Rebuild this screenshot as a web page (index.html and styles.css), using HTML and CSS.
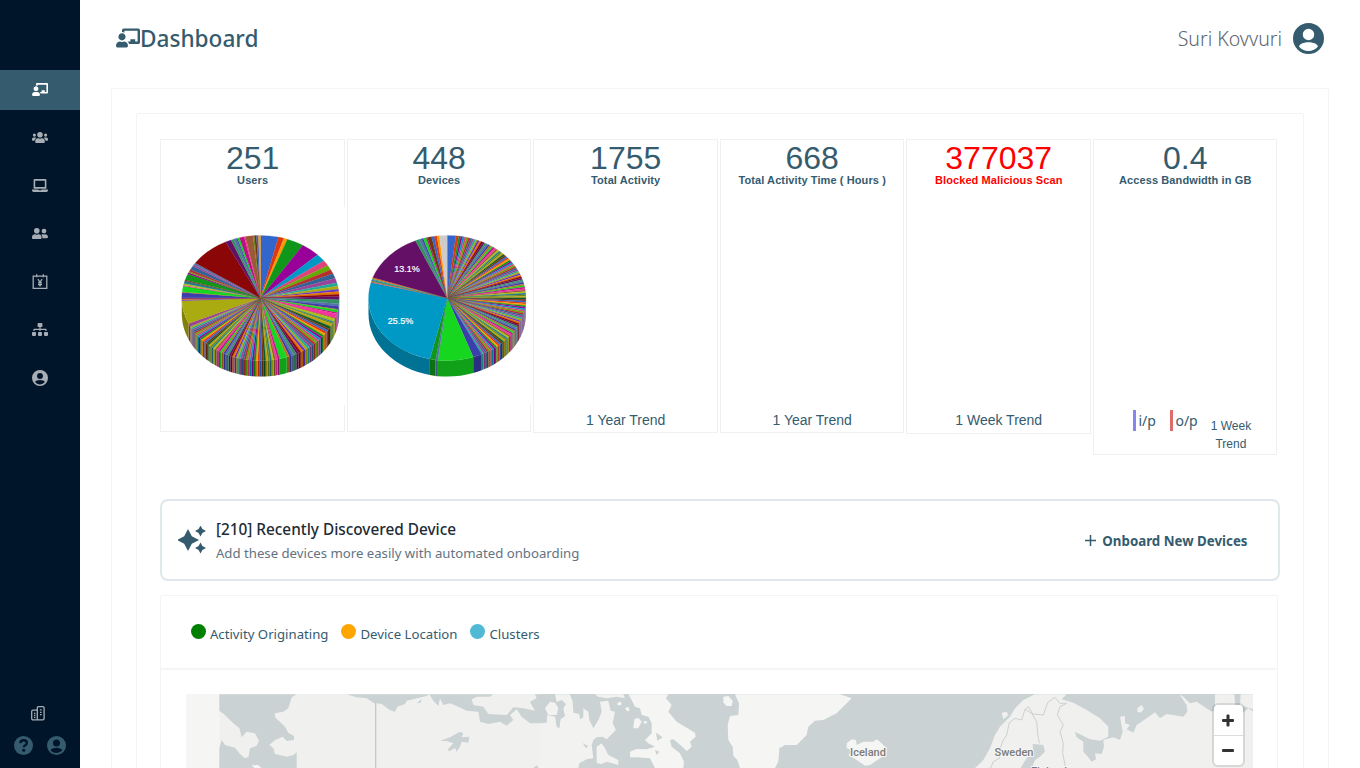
FILE: index.html
```html
<!DOCTYPE html>
<html lang="en">
<head>
<meta charset="utf-8">
<title>Dashboard</title>
<link rel="stylesheet" href="styles.css">
</head>
<body>
<svg class="defs" width="0" height="0">
  <symbol id="board" viewBox="0 0 640 512"><path d="M208 352c-2.400 0-4.800.4-7.100 1.100C188 357.300 174.400 360 160 360s-28-2.700-40.900-6.900c-2.300-.7-4.700-1.100-7.100-1.100C49.900 352-.3 402.500 0 464.600.1 490.900 21.700 512 48 512h224c26.300 0 47.900-21.100 48-47.400.3-62.100-49.900-112.600-112-112.600zm-48-32c53 0 96-43 96-96s-43-96-96-96-96 43-96 96 43 96 96 96zM592 0H208c-26.500 0-48 22.200-48 49.600V96c23.400 0 45.100 6.800 64 17.800V64h352v288h-64v-64H384v64h-76.200c19.100 16.700 33.100 38.700 39.700 64H592c26.500 0 48-22.200 48-49.600V49.600C640 22.200 618.500 0 592 0z"/></symbol>
  <symbol id="users3" viewBox="0 0 640 512"><path d="M96 224a64 64 0 1 0 0-128 64 64 0 0 0 0 128zm448 0a64 64 0 1 0 0-128 64 64 0 0 0 0 128zm32 32h-64c-17.600 0-33.500 7.100-45.100 18.600 40.300 22.100 68.900 62 75.100 109.400h66c17.700 0 32-14.300 32-32v-32c0-35.300-28.700-64-64-64zm-256 0a112 112 0 1 0 0-224 112 112 0 0 0 0 224zm76.800 32h-8.300a154 154 0 0 1-137 0h-8.300C179.600 288 128 339.600 128 403.200V432c0 26.500 21.500 48 48 48h288c26.500 0 48-21.500 48-48v-28.800c0-63.600-51.600-115.200-115.200-115.200zm-223.700-13.400C161.500 263.100 145.600 256 128 256H64c-35.300 0-64 28.700-64 64v32c0 17.700 14.300 32 32 32h65.900c6.300-47.400 34.900-87.300 75.200-109.400z"/></symbol>
  <symbol id="users2" viewBox="0 0 640 512"><path d="M192 256a112 112 0 1 0 0-224 112 112 0 0 0 0 224zm76.800 32h-8.300a154 154 0 0 1-137 0h-8.300C51.600 288 0 339.600 0 403.200V432c0 26.500 21.500 48 48 48h288c26.500 0 48-21.500 48-48v-28.800c0-63.600-51.600-115.200-115.200-115.200zM480 256a96 96 0 1 0 0-192 96 96 0 0 0 0 192zm48 32h-3.800a128 128 0 0 1-88.400 0H432c-20.400 0-39.200 5.900-55.700 15.400 24.400 26.300 39.700 61.200 39.700 99.800v38.400c0 2.200-.5 4.300-.6 6.400H592c26.500 0 48-21.500 48-48 0-61.900-50.100-112-112-112z"/></symbol>
  <symbol id="laptop" viewBox="0 0 640 512"><path d="M624 416H381.500c-.7 19.800-14.700 32-32.700 32H288c-18.700 0-33-17.500-32.800-32H16c-8.800 0-16 7.200-16 16v16c0 35.200 28.800 64 64 64h512c35.200 0 64-28.800 64-64v-16c0-8.800-7.200-16-16-16zM576 48c0-26.400-21.600-48-48-48H112C85.600 0 64 21.600 64 48v336h512zm-64 272H128V64h384z"/></symbol>
  <symbol id="tree" viewBox="0 0 640 512"><path d="M128 352H32c-17.700 0-32 14.300-32 32v96c0 17.700 14.300 32 32 32h96c17.700 0 32-14.300 32-32v-96c0-17.700-14.300-32-32-32zm-24-80h192v48h48v-48h192v48h48v-57.600c0-21.200-17.200-38.400-38.400-38.400H344v-64h40c17.700 0 32-14.300 32-32V32c0-17.700-14.300-32-32-32H256c-17.700 0-32 14.300-32 32v96c0 17.700 14.300 32 32 32h40v64H94.400C73.200 224 56 241.200 56 262.400V320h48zm264 80h-96c-17.700 0-32 14.300-32 32v96c0 17.700 14.300 32 32 32h96c17.700 0 32-14.300 32-32v-96c0-17.700-14.300-32-32-32zm240 0h-96c-17.700 0-32 14.300-32 32v96c0 17.700 14.300 32 32 32h96c17.700 0 32-14.300 32-32v-96c0-17.700-14.300-32-32-32z"/></symbol>
  <symbol id="user" viewBox="2 2 20 20"><path d="M12 2a10 10 0 1 0 0 20 10 10 0 0 0 0-20zm0 3.700a3.700 3.700 0 1 1 0 7.400 3.700 3.700 0 0 1 0-7.400zM12 20c-2.600 0-4.700-1.100-6.100-2.900.3-1.700 3.300-2.700 6.100-2.700s5.800 1 6.100 2.700A7.800 7.800 0 0 1 12 20z"/></symbol>
  <symbol id="calendar" viewBox="0 0 16 16"><path fill="none" stroke="currentColor" stroke-width="1.300" d="M1.200 2.200h13.600v12.100H1.200zM4.700.2v3M11.300.2v3M5.900 5.200 8 8.400l2.100-3.200M8 8.400v4M6 8.800h4M6 10.700h4"/></symbol>
  <symbol id="city" viewBox="0 0 14 15"><path fill="none" stroke="currentColor" stroke-width="1.300" d="M6.300 13.900V2c0-.8.500-1.300 1.300-1.300h4.200c.8 0 1.300.5 1.300 1.300v10.600c0 .8-.5 1.300-1.300 1.300H2c-.8 0-1.300-.5-1.300-1.300V5.500c0-.8.500-1.300 1.300-1.300h4.300"/><path fill="none" stroke="currentColor" stroke-width="1.200" d="M3 7.400h1.400M3 9.400h1.400M3 11.400h1.400M9 3.900h1.600M9 6.300h1.600M9 8.700h1.600"/></symbol>
  <symbol id="help" viewBox="0 0 20 20"><circle cx="10" cy="10" r="10"/><path d="M6.600 7.500c.2-2 1.600-3 3.500-3 2 0 3.400 1.100 3.400 2.900 0 2.500-3.200 2.400-3.200 4.400" fill="none" stroke="#001529" stroke-width="2.500"/><circle cx="10.200" cy="14.900" r="1.600" fill="#001529"/></symbol>
  <symbol id="sparkle" viewBox="0 0 28 28"><path d="M10 3 13.800 10.200 21 14 13.800 17.800 10 25 6.200 17.800-1 14 6.200 10.200zM22.500-.5l1.900 3.600L28 5 24.400 6.900 22.500 10.500 20.600 6.900 17 5 20.600 3.100zM22.500 16.500l1.900 3.600L28 22 24.400 23.900 22.500 27.500 20.600 23.900 17 22 20.600 20.100z"/></symbol>
</svg>
<div class="app">
  <nav class="side">
    <div class="menu">
      <a class="item active"><svg class="i16x13"><use href="#board"/></svg></a>
      <a class="item"><svg class="i16x13"><use href="#users3"/></svg></a>
      <a class="item"><svg class="i16x13"><use href="#laptop"/></svg></a>
      <a class="item"><svg class="i16x13"><use href="#users2"/></svg></a>
      <a class="item"><svg class="i16"><use href="#calendar"/></svg></a>
      <a class="item"><svg class="i16x13"><use href="#tree"/></svg></a>
      <a class="item"><svg class="i16"><use href="#user"/></svg></a>
    </div>
    <div class="bottom">
      <svg class="city"><use href="#city"/></svg>
      <div class="pair"><svg class="i19"><use href="#help"/></svg><svg class="i19"><use href="#user"/></svg></div>
    </div>
  </nav>
  <main class="main">
    <header class="head">
      <h1 class="title"><svg class="title-icon"><use href="#board"/></svg><span class="title-text">Dashboard</span></h1>
      <div class="account"><span>Suri Kovvuri</span><svg class="avatar"><use href="#user"/></svg></div>
    </header>
    <div class="outer"><div class="inner">
      <section class="cards">
        <article class="card c293"><div class="num">251</div><div class="lbl">Users</div><svg class="pie" id="pie1" viewBox="0 0 185 198"></svg></article>
        <article class="card c293"><div class="num">448</div><div class="lbl">Devices</div><svg class="pie" id="pie2" viewBox="0 0 185 198"></svg></article>
        <article class="card c294"><div class="num">1755</div><div class="lbl">Total Activity</div><div class="trend">1 Year Trend</div></article>
        <article class="card c294"><div class="num">668</div><div class="lbl">Total Activity Time ( Hours )</div><div class="trend">1 Year Trend</div></article>
        <article class="card c295 danger"><div class="num">377037</div><div class="lbl">Blocked Malicious Scan</div><div class="trend">1 Week Trend</div></article>
        <article class="card c315"><div class="num">0.4</div><div class="lbl">Access Bandwidth in GB</div>
          <div class="io"><span class="port in">i/p</span><span class="port out">o/p</span><span class="week">1 Week<br>Trend</span></div></article>
      </section>
      <section class="notice">
        <svg class="spark"><use href="#sparkle"/></svg>
        <div class="notice-text"><div class="notice-title">[210] Recently Discovered Device</div><div class="notice-sub">Add these devices more easily with automated onboarding</div></div>
        <div class="onboard"><svg class="plus" viewBox="0 0 11 11"><path d="M5.500 0v11M0 5.500h11"/></svg>Onboard New Devices</div>
      </section>
      <section class="mapbox">
        <div class="legend"><span class="key"><i class="dot green"></i>Activity Originating</span><span class="key"><i class="dot orange"></i>Device Location</span><span class="key"><i class="dot blue"></i>Clusters</span></div>
        <div class="mapwrap">
          <svg class="map" viewBox="186 694 1067 340">
            <rect class="water" x="186" y="694" width="1067" height="340"/>
            <rect class="land" x="219" y="694" width="322" height="340"/>
            <rect class="pale" x="186" y="694" width="33.500" height="340"/>
            <g transform="translate(160 680) scale(.33333)">
              <path class="water" d="M178 43H410L395 52 385 85 370 95 345 100V112L375 140 385 158 402 168V180L380 183 368 170 345 180 328 195 340 205 345 222 380 230 400 225 410 217V264H178V205L185 180 195 195 225 203 240 222 255 235 266 230 270 205 290 197 297 182 285 160 260 155 245 172 238 145 215 125 195 105 178 92z"/>
              <path class="water" d="M560 43 590 52 620 55 640 68 665 72 690 90 705 96 712 80 735 72 740 62 765 56 800 48 808 43zM770 70 785 57 782 68zM808 43 820 62 835 78 840 55 850 75 870 70 890 78 920 92 955 95 960 125 985 132 1020 125 1040 137 1060 120 1050 105 1070 88 1085 110 1110 130 1160 130 1165 105 1155 90 1160 70 1175 65 1190 75 1200 60V43H1125L1130 55 1110 65 1125 92 1090 85 1060 82 1040 105 985 102 970 80 940 75 935 58 950 50 990 50 1000 43z"/>
              <path class="water" d="M840 182 870 172 900 155 910 160 905 172 928 170 925 188 905 185 900 200 890 215 885 203 870 213 862 210 880 190 860 183z"/>
              <path class="water" d="M1120 264 1130 256 1136 264z"/>
              <path class="pale" d="M275 256 295 255 306 266 285 266z"/>
              <path class="line" d="M647 66V300"/>
            </g>
            <g transform="translate(540 680) scale(.33333)">
              <path class="mid" d="M0 130 20 128 22 105 45 110 50 140 58 145 62 118 75 108 70 85 78 72 65 60 50 66 45 43H90L98 65 100 98 118 102 120 118 130 112 130 85 145 95 148 120 160 145 175 120 185 95 180 65 205 62 212 92 225 95 218 130 228 150 200 178 188 170 170 172 160 180 155 195 160 235 140 238 118 250 115 264H0zM15 85 30 65 45 68 55 85 50 105 25 105zM170 200 185 190 195 205 205 225 235 240 235 255 200 245 185 252 170 250zM165 43H250L255 55 230 50 200 55 175 50z"/>
              <path class="pale" d="M265 43H385L378 55 395 75 385 95 410 125 435 140 465 158 467 170 450 185 455 200 440 213 415 190 400 178 390 180 395 200 420 220 432 245 430 264H345L330 235 290 232 270 232 270 215 290 207 320 208 345 200 325 190 315 180 335 160 335 130 325 110 305 105 300 85 285 80 275 60zM283 118 295 113 305 125 295 145 280 145zM550 50 565 48 578 62 575 78 560 78 550 68zM230 72l10-8 6 8-8 5zM255 85l10-5 4 12-8 2zM310 125l8-3 4 7-9 2z"/>
              <path class="water" d="M348 158 368 172 352 182zM345 210 358 215 350 225zM128 190 145 198 138 205z"/>
              <path class="pale" d="M585 43 597 70 595 105 570 108 563 135 565 180 578 200 580 228 592 240 600 264H705L715 245 718 205 735 195 770 195 800 165 805 140 825 122 850 120 890 100 935 55 900 43zM920 190 935 178 948 180 950 195 970 185 1000 185 1010 178 1020 185 1040 205V222L1020 235 990 255 975 257 950 240 925 225 940 212 920 205z"/>
            </g>
            <g transform="translate(900 680) scale(.33333)">
              <path class="land" d="M225 264 250 240 270 205 285 165 300 140 330 110 345 85 370 60 400 45 405 43H500L485 58 520 68 560 90 600 115 625 140V170L600 182 570 178 525 155 530 172 550 185V215L565 232 575 245 588 238 585 220 605 222 612 200 610 180 640 172 660 180 668 155 660 110 675 108V130L690 135 680 148 700 158 710 135 740 115 765 97 780 115 800 102 850 110 862 95 860 75 838 43 850 50 870 70 890 65 935 95 945 90V43H1003L1005 70 1010 95 1028 100 1045 85 1060 95V264zM1022 43H1060V88L1040 82 1020 75zM712 85 725 75 732 87 722 98 712 95zM305 98 320 95 325 105 310 118z"/>
              <path class="water" d="M362 264 380 235 400 215 398 192 430 195 435 215 420 230 405 240 395 264z"/>
              <path class="line thin" d="M272 264 280 245 298 235 300 205 310 180 320 165 328 128 345 115 365 120 375 88 395 100 410 125 413 160 418 190M375 88 385 80 398 102 430 105 443 68 465 52 480 70 500 70 480 80 472 105 490 135 480 155 490 190 488 220 497 264"/>
            </g>
            <text class="place" x="868" y="755.500">Iceland</text>
            <text class="place" x="1014" y="756">Sweden</text>
            <text class="place" x="1049" y="775">Finland</text>
          </svg>
          <div class="zoomer"><span class="zb"><i class="bar"></i><i class="bar up"></i></span><span class="zb"><i class="bar"></i></span></div>
        </div>
      </section>
    </div></div>
  </main>
</div>
<script src="pies.js"></script>
</body>
</html>
```
FILE: styles.css
```css
*{box-sizing:border-box}
body{margin:0;font-family:"Noto Sans","Open Sans",sans-serif;color:#355b6e;background:#fff;overflow:hidden}
.defs{position:absolute}
svg{fill:currentColor;display:block}
.app{display:flex;height:768px;overflow:hidden}
.side{width:80px;flex:none;background:#001529;display:flex;flex-direction:column;justify-content:space-between;padding:70px 0 13px}
.menu{display:flex;flex-direction:column;gap:8px}
.item{height:40px;display:flex;align-items:center;justify-content:center;color:#a6adb4;padding-bottom:1px}
.item.active{background:#355b6e;color:#fff}
.i16x13{width:16px;height:13px}
.i16{width:16px;height:16px}
.i19{width:19px;height:19px}
.bottom{display:flex;flex-direction:column;gap:15px;color:#355b6e}
.city{width:14px;height:15px;margin-left:31px;color:#a6adb4}
.pair{display:flex;gap:14px;margin-left:14px}
.main{flex:1;padding:0 31px;min-width:0}
.head{height:88px;display:flex;justify-content:space-between;padding:0 5px 12px;align-items:center}
.title{margin:0;font-size:22.600px;font-weight:500;display:flex;align-items:center;line-height:30px}
.title-text{padding-top:2px}
.title-icon{width:24px;height:20px}
.account{display:flex;align-items:center;gap:11px;font-size:19.500px;font-weight:300;color:#5c6670}
.avatar{width:31px;height:31px;color:#355b6e}
.outer{border:1px solid #f4f4f4;border-radius:2px;padding:24px;height:900px}
.inner{border:1px solid #f4f4f4;border-radius:2px;padding:25px 25.500px 0 23.400px;height:900px}
.cards{display:flex;gap:2px;height:360px;align-items:flex-start;font-family:"Liberation Sans",Arial,sans-serif}
.card{flex:1 1 0;min-width:0;border:1px solid #f0f0f0;text-align:center;display:flex;flex-direction:column;align-items:center}
.c293{height:293px}.c294{height:294px}.c295{height:295px}.c315{height:316px}
.num{font-size:32px;line-height:32px;padding-top:2px}
.lbl{font-size:11px;font-weight:700;line-height:12px;padding-bottom:1px;white-space:nowrap;letter-spacing:.1px}
.danger .num,.danger .lbl{color:#f00}
.trend{font-size:14px;line-height:20px;margin-top:223px}
.pie{width:185px;height:198px;margin:20px -2px 0 0;align-self:flex-start;background:#fff;flex:none}
.pct{font:500 9px "Liberation Sans",Arial,sans-serif;fill:#fff;stroke:#fff;stroke-width:.2px;text-anchor:middle}
.io{display:flex;margin-top:223px;align-self:stretch;padding-left:39px}
.port{font:14px/20px "Noto Sans",sans-serif;border-left:3px solid #8585f4;height:21px;padding:1px 0 0 2.500px;margin-right:14px}
.out{border-color:#df6b6b;margin-right:13px}
.week{font-size:12px;line-height:18px;padding-top:7px;white-space:nowrap}
.notice{height:82px;border:2px solid #dfe7eb;border-radius:8px;display:flex;align-items:center;padding:0 30px 0 16px;margin-right:-2px}
.spark{width:28px;height:28px;margin:-1px 9.500px 0 0;overflow:visible}
.notice-text{flex:1;padding-top:2px}
.notice-title{font-size:15.350px;font-weight:500;line-height:24px;color:#212b36}
.notice-sub{font-size:13.200px;line-height:23px;color:#637381;padding-top:1px}
.onboard{display:flex;align-items:center;gap:6px;font-size:13.300px;font-weight:700;padding-top:1px}
.plus{width:11px;height:11px;margin-top:-1px;stroke:currentColor;stroke-width:1.500;fill:none}
.mapbox{margin-top:14px;border:1px solid #f4f4f4;border-radius:2px}
.legend{height:74px;border-bottom:2px solid #f5f5f5;padding:4px 0 0 29.500px;display:flex;align-items:center;font-size:13.200px;gap:13px}
.key{display:flex;align-items:center;gap:4px}
.dot{width:15px;height:15px;border-radius:50%;margin-top:-6px}
.green{background:green}.orange{background:orange}.blue{background:#51b9d6}
.mapwrap{width:1067px;margin:24px 0 0 24.500px;position:relative;overflow:hidden}
.map{width:1067px;height:340px}
.water{fill:#cad2d3}.land{fill:#f0f0ef}.mid{fill:#f2f2f1}.pale{fill:#f5f5f3}
.line{fill:none;stroke:#c6c8c8;stroke-width:4}
.thin{stroke-width:2.500}
.place{font:500 11px Roboto,sans-serif;fill:#7c7c7c;text-anchor:middle;stroke:#f5f5f3;stroke-width:2px;paint-order:stroke}
.zoomer{position:absolute;right:10px;top:11px;width:29px;height:60px;background:#fff;border-radius:4px;box-shadow:0 0 0 2px rgba(0,0,0,.1)}
.zb{display:flex;height:30px;align-items:center;justify-content:center;position:relative}
.zb+.zb{border-top:1px solid #ddd}
.bar{width:12px;height:3px;border-radius:1px;background:#333}
.up{position:absolute;transform:rotate(90deg)}
```
FILE: pies.js
```js
const PALETTE = "3366cc dc3912 ff9900 109618 990099 0099c6 dd4477 66aa00 b82e2e 316395 994499 22aa99 aaaa11 6633cc e67300 8b0707 651067 329262 5574a6 3b3eac b77322 16d620 b91383 f4359e 9c5935 a9c413 2a778d 668d1c bea413 0c5922 743411".split(" ");

// Fill the arc between two angles with evenly sized slices, cycling the palette.
function run(from, to, count, first) {
  const out = [];
  for (let i = 0; i < count; i++)
    out.push([from + (to - from) * (i + 1) / count, PALETTE[(first + i) % PALETTE.length]]);
  return out;
}

function shade(hex) {
  const n = [0, 2, 4].map(i => Math.round(parseInt(hex.substr(i, 2), 16) * 0.75));
  return `rgb(${n})`;
}

function draw(id, cx, slices, labels) {
  const cy = 91, rx = 78.700, ry = 62.600, depth = 16, rad = Math.PI / 180;
  const pt = (a, dy = 0) => `${(cx + rx * Math.sin(a * rad)).toFixed(2)} ${(cy + dy - ry * Math.cos(a * rad)).toFixed(2)}`;
  let sides = "", tops = "", a = 0;
  for (const [b, c] of slices) {
    const s = Math.max(a, 90), e = Math.min(b, 270);
    if (e > s) sides += `<path fill="${shade(c)}" d="M${pt(s)}A${rx} ${ry} 0 0 1 ${pt(e)}L${pt(e, depth)}A${rx} ${ry} 0 0 0 ${pt(s, depth)}z"/>`;
    tops += `<path fill="#${c}" stroke="#${c}" stroke-width=".2" d="M${cx} ${cy}L${pt(a)}A${rx} ${ry} 0 0 1 ${pt(b)}z"/>`;
    a = b;
  }
  const text = labels.map(([x, y, t]) => `<text class="pct" x="${x}" y="${y}">${t}</text>`).join("");
  document.getElementById(id).innerHTML = sides + tops + text;
}

const users = [13.2, 17.3, 20, 32.6, 46.4, 53.6, 58.7, 63.1, 67.2, 71.6, 76, 79, 82, 84, 86.6, 88.6, 91.5, 95.2, 97.6, 100.4, 101, 103.5, 104.6, 108.6, 109.4, 112, 113.2, 114.6, 117, 119.5, 121].map((a, i) => [a, PALETTE[i]]);
draw("pie1", 99.500, [
  ...users, ...run(121, 160.500, 21, 0), [166, "16d620"],
  ...run(166, 243, 53, 22), [246, "994499"], [267.500, "aaaa11"],
  [268.500, "6633cc"], [269.300, "e67300"], [270.300, "651067"], [275, "3b3eac"], [275.700, "b77322"], [281, "16d620"],
  [282, "f4359e"], [283.500, "a9c413"], [286, "2a778d"], [287, "743411"], [292.500, "109618"], [294, "990099"], [295, "66aa00"],
  [297, "b82e2e"], [300.500, "316395"], [302, "994499"], [304, "5574a6"],
  [333.600, "8b0707"], [338, "651067"], [340, "329262"], [342, "5574a6"], [343, "3b3eac"], [344.500, "16d620"],
  [348, "b91383"], [349, "f4359e"], [354.600, "9c5935"], [355.500, "668d1c"], [357, "743411"], [358.500, "3366cc"], [360, "ff9900"]
], []);
draw("pie2", 99.200, [
  [6.300, "3366cc"], [8.500, "dc3912"], ...run(8.500, 154, 102, 3), [160.700, "3b3eac"], [186.800, "16d620"],
  [188.500, "5574a6"], [192.700, "109618"], [284.300, "0099c6"], [285.200, "dd4477"], [286, "66aa00"], [287, "316395"], [288, "22aa99"], [289, "e67300"],
  [336.200, "651067"], [339, "329262"], [341, "5574a6"], [342.300, "3b3eac"], [344.500, "16d620"], [345.500, "b91383"], [348.500, "743411"],
  [350.500, "3366cc"], [352.500, "dc3912"], [354.300, "ff9900"], [360, "cccccc"]
], [[59, 64.500, "13.1%"], [52.500, 116.500, "25.5%"]]);
```
